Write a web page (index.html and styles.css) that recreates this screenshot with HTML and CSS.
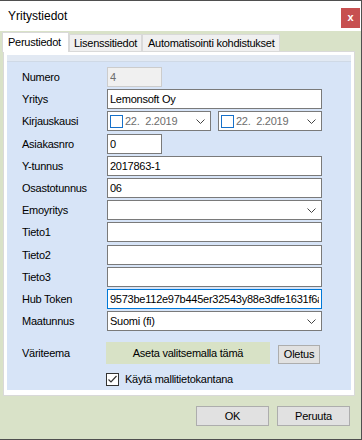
FILE: index.html
```html
<!DOCTYPE html>
<html>
<head>
    <title>Yritystiedot</title>
    <meta name="viewport" content="width=device-width, initial-scale=1">
    <link rel="stylesheet" href="styles.css">
</head>
<body>
<div class="window">
    <div class="titlebar">
        <div class="title">Yritystiedot</div>
        <div class="close">x</div>
    </div>
    <div class="content">
        <div class="tabs">
            <div class="tab active tab-basic">Perustiedot</div>
            <div class="tab tab-license">Lisenssitiedot</div>
            <div class="tab tab-auto">Automatisointi kohdistukset</div>
        </div>
        <div class="page">
            <div class="panel">
                <div class="panel-top"></div>
                <div class="form">
                    <label>Numero</label>
                    <input class="field short disabled" type="text" value="4" disabled>

                    <label>Yritys</label>
                    <input class="field" type="text" value="Lemonsoft Oy">

                    <label>Kirjauskausi</label>
                    <div class="dates">
                        <div class="date">
                            <span class="date-check"></span>
                            <span class="date-text">22.&nbsp; 2.2019</span>
                            <svg class="chevron" width="9" height="5" viewBox="0 0 9 5"><path d="M0.5 0.5 L4.5 4.5 L8.5 0.5" fill="none" stroke="#444"/></svg>
                        </div>
                        <div class="date">
                            <span class="date-check"></span>
                            <span class="date-text">22.&nbsp; 2.2019</span>
                            <svg class="chevron" width="9" height="5" viewBox="0 0 9 5"><path d="M0.5 0.5 L4.5 4.5 L8.5 0.5" fill="none" stroke="#444"/></svg>
                        </div>
                    </div>

                    <label>Asiakasnro</label>
                    <input class="field short" type="text" value="0">

                    <label>Y-tunnus</label>
                    <input class="field" type="text" value="2017863-1">

                    <label>Osastotunnus</label>
                    <input class="field" type="text" value="06">

                    <label>Emoyritys</label>
                    <div class="field combo">
                        <span></span>
                        <svg class="chevron" width="9" height="5" viewBox="0 0 9 5"><path d="M0.5 0.5 L4.5 4.5 L8.5 0.5" fill="none" stroke="#444"/></svg>
                    </div>

                    <label>Tieto1</label>
                    <input class="field" type="text" value="">

                    <label>Tieto2</label>
                    <input class="field" type="text" value="">

                    <label>Tieto3</label>
                    <input class="field" type="text" value="">

                    <label>Hub Token</label>
                    <input class="field focused" type="text" value="9573be112e97b445er32543y88e3dfe1631f6a2">

                    <label>Maatunnus</label>
                    <div class="field combo">
                        <span>Suomi (fi)</span>
                        <svg class="chevron" width="9" height="5" viewBox="0 0 9 5"><path d="M0.5 0.5 L4.5 4.5 L8.5 0.5" fill="none" stroke="#444"/></svg>
                    </div>
                </div>

                <div class="theme-row">
                    <label>Väriteema</label>
                    <div class="theme-btn">Aseta valitsemalla tämä</div>
                    <div class="btn small">Oletus</div>
                </div>

                <div class="check-row">
                    <span class="checkbox">
                        <svg width="11" height="11" viewBox="0 0 11 11"><path d="M1.5 5.5 L4 8 L9.5 2" fill="none" stroke="#333" stroke-width="1.2"/></svg>
                    </span>
                    <span>Käytä mallitietokantana</span>
                </div>
            </div>
        </div>
        <div class="footer">
            <div class="btn">OK</div>
            <div class="btn">Peruuta</div>
        </div>
    </div>
</div>
</body>
</html>
```

FILE: styles.css
```css
body { margin: 0; font-family: "Liberation Sans", Arial, sans-serif; font-size: 11px; letter-spacing: -0.25px; color: #000; background: #fff; }

.window { width: 361px; height: 438px; border-top: 1px solid #4f4f4f; border-bottom: 1px solid #4f4f4f; border-right: 1px solid #4f4f4f; display: flex; flex-direction: column; }

/* title bar */
.titlebar { height: 30px; display: flex; justify-content: space-between; align-items: flex-start; background: #fff; }
.title { font-size: 12px; letter-spacing: 0; line-height: 14px; margin: 8px 0 0 8px; }
.close { width: 19px; height: 20px; margin: 7px 1px 0 0; background: #c75050; color: #fff; font-weight: bold; font-size: 11px; line-height: 18px; text-align: center; }

.content { flex: 1; background: #d9e2c8; display: flex; flex-direction: column; }

/* tabs */
.tabs { display: flex; align-items: flex-end; height: 19px; margin-top: 1px; padding-left: 2px; }
.tab { box-sizing: border-box; height: 17px; border: 1px solid #d9d9d9; border-bottom: none; background: #f0f0f0; line-height: 16px; white-space: nowrap; }
.tab.active { height: 20px; background: #fff; margin-bottom: -1px; position: relative; z-index: 1; line-height: 18px; }
.tab-basic { width: 67px; padding-left: 5px; }
.tab-license { width: 73px; padding-left: 4px; }
.tab-auto { width: 138px; padding-left: 5px; }

.page { box-sizing: border-box; height: 345px; margin: 0 6px 0 3px; border: 1px solid #d9d9d9; background: #fff; padding: 3px 3px 5px 3px; display: flex; }
.panel { flex: 1; background: #d7e4f7; display: flex; flex-direction: column; }
.panel-top { height: 6px; background: #e2e9f3; border-bottom: 1px solid #cfd9e6; }

/* form rows */
.form { display: grid; grid-template-columns: 85px 215px; grid-auto-rows: 20px; row-gap: 2.2px; align-items: center; padding: 5px 0 0 15px; }
.field { box-sizing: border-box; width: 100%; height: 20px; margin: 0; padding: 0 2px; border: 1px solid #7a7a7a; background: #fff; font: inherit; letter-spacing: inherit; color: #000; outline: none; }
.field.short { width: 55px; }
.field.disabled { border-color: #cccccc; background: #f0f0f0; color: #6d6d6d; }
.field.focused { border-color: #0078d7; }

.combo { display: flex; align-items: center; justify-content: space-between; padding: 0 5px 0 2px; }

.dates { display: flex; gap: 7px; }
.date { box-sizing: border-box; flex: 1; height: 20px; border: 1px solid #7a7a7a; background: #fff; display: flex; align-items: center; padding: 0 5px 0 2px; }
.date-check { box-sizing: border-box; width: 13px; height: 13px; border: 1px solid #1670c9; background: #fff; }
.date-text { flex: 1; margin-left: 2px; color: #6d6d6d; }

/* colour theme + checkbox */
.theme-row { display: flex; align-items: flex-end; margin: 10.5px 0 0 15px; }
.theme-row label { width: 84px; align-self: center; }
.theme-btn { width: 164px; height: 22px; line-height: 22px; text-align: center; background: #d8e2c6; }
.btn { box-sizing: border-box; width: 73px; height: 20px; line-height: 18px; text-align: center; background: #e1e1e1; border: 1px solid #adadad; }
.btn.small { width: 42px; height: 19px; line-height: 17px; margin-left: 8px; }

.check-row { display: flex; align-items: center; gap: 6px; margin: 9px 0 0 99px; }
.checkbox { box-sizing: border-box; width: 13px; height: 13px; border: 1px solid #333; background: #fff; display: flex; align-items: center; justify-content: center; }

.footer { display: flex; justify-content: flex-end; gap: 8px; padding: 10px 11px 0 0; }
```
